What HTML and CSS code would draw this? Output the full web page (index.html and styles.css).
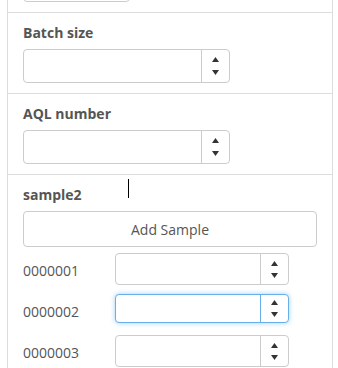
FILE: index.html
```html
<!DOCTYPE html>
<html lang="en">
<head>
  <meta charset="UTF-8" />
  <meta name="viewport" content="width=device-width, initial-scale=1.0"/>
  <title>Inspection</title>
  <link rel="stylesheet" href="styles.css">
</head>
<body>
  <div class="panel">
    <!-- previous field, scrolled mostly out of view -->
    <div class="section cut">
      <input type="text" class="plain-input" />
    </div>

    <div class="section">
      <label class="field-label">Batch size</label>
      <div class="spin">
        <input type="text" />
        <div class="arrows">
          <span><svg width="7" height="5" viewBox="0 0 7 5"><polygon points="0,5 3.5,0 7,5"/></svg></span>
          <span><svg width="7" height="5" viewBox="0 0 7 5"><polygon points="0,0 7,0 3.5,5"/></svg></span>
        </div>
      </div>
    </div>

    <div class="section">
      <label class="field-label">AQL number</label>
      <div class="spin">
        <input type="text" />
        <div class="arrows">
          <span><svg width="7" height="5" viewBox="0 0 7 5"><polygon points="0,5 3.5,0 7,5"/></svg></span>
          <span><svg width="7" height="5" viewBox="0 0 7 5"><polygon points="0,0 7,0 3.5,5"/></svg></span>
        </div>
      </div>
    </div>

    <div class="section">
      <label class="field-label">sample2</label>
      <button type="button" class="add-btn">Add Sample</button>

      <div class="sample-row">
        <span class="sample-id">0000001</span>
        <div class="spin small">
          <input type="text" />
          <div class="arrows">
            <span><svg width="7" height="5" viewBox="0 0 7 5"><polygon points="0,5 3.5,0 7,5"/></svg></span>
            <span><svg width="7" height="5" viewBox="0 0 7 5"><polygon points="0,0 7,0 3.5,5"/></svg></span>
          </div>
        </div>
      </div>

      <div class="sample-row">
        <span class="sample-id">0000002</span>
        <div class="spin small focused">
          <input type="text" />
          <div class="arrows">
            <span><svg width="7" height="5" viewBox="0 0 7 5"><polygon points="0,5 3.5,0 7,5"/></svg></span>
            <span><svg width="7" height="5" viewBox="0 0 7 5"><polygon points="0,0 7,0 3.5,5"/></svg></span>
          </div>
        </div>
      </div>

      <div class="sample-row">
        <span class="sample-id">0000003</span>
        <div class="spin small">
          <input type="text" />
          <div class="arrows">
            <span><svg width="7" height="5" viewBox="0 0 7 5"><polygon points="0,5 3.5,0 7,5"/></svg></span>
            <span><svg width="7" height="5" viewBox="0 0 7 5"><polygon points="0,0 7,0 3.5,5"/></svg></span>
          </div>
        </div>
      </div>
    </div>
  </div>

  <!-- text cursor left over from the screenshot -->
  <div class="caret"></div>
</body>
</html>
```

FILE: styles.css
```css
html, body {
  margin: 0;
  height: 100%;
  overflow: hidden;
}

body {
  background: white;
  font-family: "Open Sans", Arial, sans-serif;
  font-size: 14px;
  color: #555;
}

.panel {
  margin: -69px 5px 0 7px;
  border-left: 1px solid #ddd;
  border-right: 1px solid #ddd;
}

.section {
  border-top: 1px solid #ddd;
  padding: 10px 15px;
}

.section.cut {
  padding-top: 36px;
}

.field-label {
  display: block;
  font-weight: bold;
  line-height: 20px;
  margin-bottom: 6px;
}

.plain-input {
  display: block;
  box-sizing: border-box;
  width: 107px;
  height: 34px;
  border: 1px solid #ccc;
  border-radius: 4px;
}

.spin {
  display: flex;
  box-sizing: border-box;
  width: 207px;
  height: 34px;
  border: 1px solid #ccc;
  border-radius: 4px;
  background: white;
}

.spin input {
  flex: 1;
  min-width: 0;
  border: none;
  outline: none;
  background: transparent;
  border-radius: 4px 0 0 4px;
}

.arrows {
  width: 27px;
  border-left: 1px solid #ccc;
  display: flex;
  flex-direction: column;
  padding: 3px 0;
}

.arrows span {
  flex: 1;
  display: flex;
  align-items: center;
  justify-content: center;
}

.arrows svg {
  fill: #333;
}

.add-btn {
  display: block;
  width: 100%;
  height: 36px;
  margin-top: 4px;
  background: white;
  border: 1px solid #ccc;
  border-radius: 4px;
  font-family: inherit;
  font-size: 14px;
  color: #555;
}

.sample-row {
  display: flex;
  align-items: center;
  height: 32px;
  margin-top: 9px;
}

.add-btn + .sample-row {
  margin-top: 6px;
}

.sample-id {
  width: 92px;
  padding-top: 2px;
}

.spin.small {
  width: 174px;
  height: 32px;
}

.spin.focused {
  align-self: flex-start;
  height: 29px;
  border-color: #66afe9;
  box-shadow: 0 0 5px rgba(102, 175, 233, 0.6);
}

.spin.focused .arrows {
  border-left-color: #66afe9;
  padding: 1px 0;
}

.caret {
  position: absolute;
  left: 128px;
  top: 179px;
  width: 1px;
  height: 19px;
  background: #000;
}
```
